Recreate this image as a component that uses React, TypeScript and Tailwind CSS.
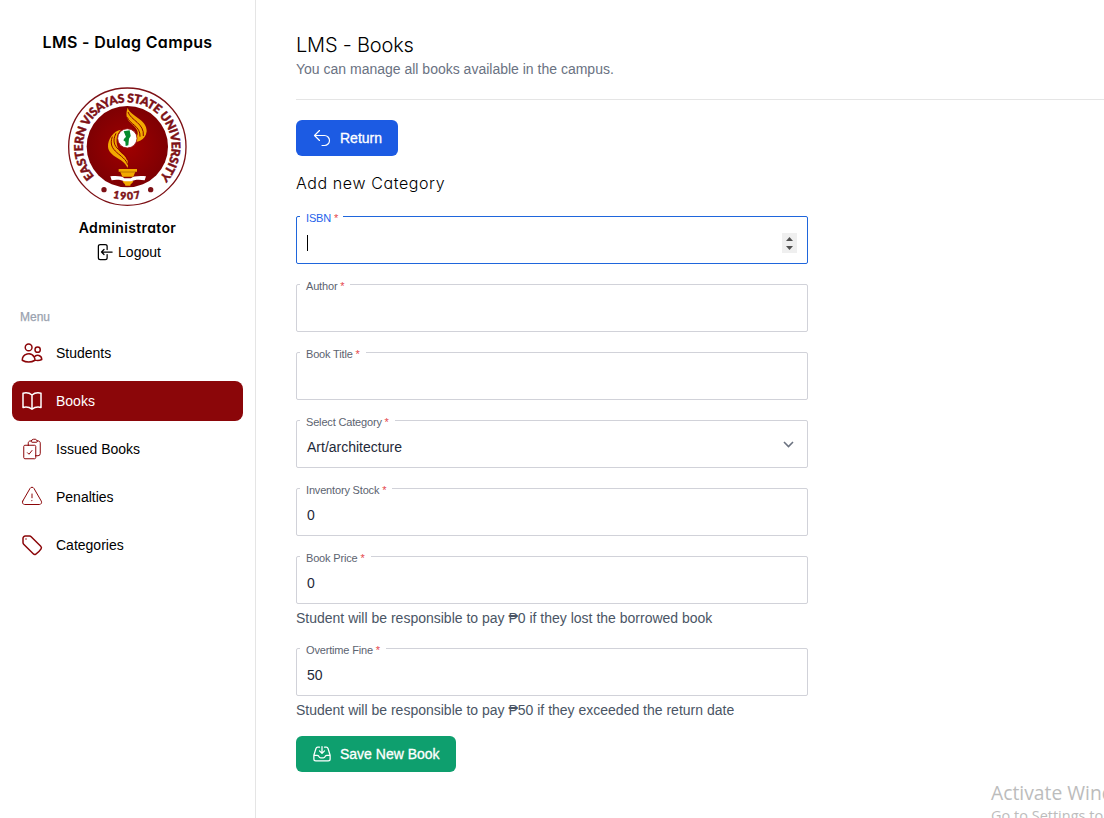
import React from 'react';
import {
  HiOutlineUsers,
  HiOutlineBookOpen,
  HiOutlineClipboardDocumentCheck,
  HiOutlineExclamationTriangle,
  HiOutlineTag,
  HiOutlineArrowLeftOnRectangle,
  HiOutlineArrowUturnLeft,
  HiOutlineInboxArrowDown,
} from 'react-icons/hi2';

const heading = "font-['Inter',sans-serif] [font-feature-settings:'cv11','ss03']";

function Seal() {
  return (
    <svg className="h-[120px] w-[120px]" viewBox="24 21 360 360">
      <defs>
        <radialGradient id="sealRed">
          <stop offset="0" stopColor="#a00000" />
          <stop offset="1" stopColor="#7e0003" />
        </radialGradient>
        <path id="sealTop" d="M103.2 289 A133 133 0 1 1 300.8 289" />
        <path id="sealBottom" d="M120 336 A159 159 0 0 0 284 336" />
      </defs>
      <circle cx="202" cy="200" r="176" fill="#fff" stroke="#7d1015" strokeWidth="4" />
      <circle cx="202" cy="200" r="122" fill="url(#sealRed)" />
      <g fill="#7d1015" stroke="#7d1015" strokeWidth="1.4" fontFamily="Lato, sans-serif" fontWeight="900">
        <text fontSize="36" textLength="616" lengthAdjust="spacing">
          <textPath href="#sealTop">EASTERN VISAYAS STATE UNIVERSITY</textPath>
        </text>
        <text fontSize="31" textAnchor="middle" letterSpacing="4">
          <textPath href="#sealBottom" startOffset="50%">1907</textPath>
        </text>
      </g>
      <circle cx="132" cy="329" r="8" fill="#7d1015" />
      <circle cx="272" cy="329" r="8" fill="#7d1015" />
      <path d="M203 83 C210 108 262 118 260 154 C257 182 230 188 212 188 L224 176 C236 166 234 158 231 150 C224 130 188 126 203 83Z" fill="#f2a900" />
      <path d="M202 112 C208 132 242 138 240 170 M204 96 C212 121 254 130 250 168" fill="none" stroke="#8a0000" strokeWidth="3" />
      <path d="M183 149 C160 152 143 178 144 200 C147 232 190 232 203 264 C212 228 176 221 174 204 C168 188 166 165 183 149Z" fill="#f2a900" />
      <path d="M168 160 C144 208 200 214 202 240 M157 170 C140 216 194 222 203 254" fill="none" stroke="#8a0000" strokeWidth="3" />
      <circle cx="202" cy="175" r="29" fill="#fff" stroke="#9d1515" strokeWidth="2.5" />
      <path d="M191 154 L209 151 L212 168 L207 176 L205 196 L197 198 L196 185 L190 181 L194 174 L198 171Z" fill="#078b2d" />
      <path d="M176 267 H231 V275 H226 L220 290 H187 L181 275 H176Z M188 302 H220 C219 310 211 310 211 317 H196 C196 310 189 310 188 302Z" fill="#f2a900" />
      <path d="M180 276 H227" stroke="#a35b00" strokeWidth="2" />
      <path d="M151 289 C172 287 188 289 193 295 H213 C218 289 236 287 258 289 L254 301 C239 298 221 299 214 304 H193 C186 299 166 298 155 301Z" fill="#fff" />
    </svg>
  );
}

function MenuItem({ icon, label, active }: { icon: React.ReactNode; label: string; active?: boolean }) {
  return (
    <a
      className={
        active
          ? 'flex h-10 items-center gap-3 rounded-lg bg-[#8b0609] px-2 text-white'
          : 'flex h-10 items-center gap-3 rounded-lg px-2 text-black'
      }
    >
      <span className={active ? 'text-2xl text-white' : 'text-2xl text-[#8b0609]'}>{icon}</span>
      <span className="text-sm">{label}</span>
    </a>
  );
}

type FieldProps = { label: string; focused?: boolean; children?: React.ReactNode };

function Field({ label, focused, children }: FieldProps) {
  return (
    <div
      className={
        focused
          ? 'relative flex h-12 w-[512px] items-center rounded-[2px] border border-[#1f66dc] px-2.5'
          : 'relative flex h-12 w-[512px] items-center rounded-[2px] border border-[#d1d2d9] px-2.5'
      }
    >
      <label
        className={
          focused
            ? 'absolute -top-[7px] left-[3px] bg-white pr-[5px] pl-1.5 text-[11px] leading-4 tracking-[-0.17px] text-[#2563eb]'
            : 'absolute -top-[7px] left-[3px] bg-white pr-[6px] pl-1.5 text-[11px] leading-4 tracking-[-0.17px] text-[#5c6370]'
        }
      >
        {label} <span className="text-[#e5484d]">*</span>
      </label>
      <div className="flex flex-1 items-center justify-between pt-[6px] text-sm leading-5 text-gray-800">{children}</div>
    </div>
  );
}

export default function App() {
  return (
    <div className="relative flex h-[818px] w-[1104px] overflow-hidden bg-white font-['Liberation_Sans',Arial,sans-serif]">
      <aside className="flex w-64 shrink-0 flex-col border-r border-[#e5e5e5] px-3">
        <div className="flex flex-col items-center">
          <h1 className={`${heading} mt-[30px] text-base leading-6 font-semibold tracking-[0.33px] text-black`}>LMS - Dulag Campus</h1>
          <div className="mt-[33px]">
            <Seal />
          </div>
          <p className={`${heading} mt-[9px] text-sm leading-6 font-semibold tracking-[0.37px] text-black`}>Administrator</p>
          <button className="flex h-6 items-center gap-1 pl-px text-sm text-black">
            <HiOutlineArrowLeftOnRectangle className="-ml-px text-xl" />
            Logout
          </button>
        </div>
        <p className="mt-[45px] pl-2 text-xs leading-4 text-gray-400 [-webkit-text-stroke:0.25px_#9ca3af]">Menu</p>
        <nav className="mt-2 flex flex-col gap-2">
          <MenuItem icon={<HiOutlineUsers />} label="Students" />
          <MenuItem icon={<HiOutlineBookOpen />} label="Books" active />
          <MenuItem icon={<HiOutlineClipboardDocumentCheck strokeWidth={1} />} label="Issued Books" />
          <MenuItem icon={<HiOutlineExclamationTriangle strokeWidth={1} />} label="Penalties" />
          <MenuItem icon={<HiOutlineTag />} label="Categories" />
        </nav>
      </aside>

      <main className="flex flex-1 flex-col pt-[31px] pl-10">
        <h2 className={`${heading} text-xl leading-7 font-light tracking-[-0.2px] text-black`}>LMS - Books</h2>
        <p className="text-sm leading-5 text-gray-500">You can manage all books available in the campus.</p>
        <hr className="mt-5 border-[#e5e5e5]" />
        <button className="mt-5 flex h-9 w-[102px] items-center gap-2 rounded-md bg-[#1c5be3] pl-4 text-sm text-white [-webkit-text-stroke:0.3px_white]">
          <HiOutlineArrowUturnLeft className="text-xl" strokeWidth={1.4} />
          Return
        </button>
        <h3 className={`${heading} mt-[15px] mb-[21px] text-base leading-6 font-light tracking-[0.6px] text-black`}>Add new Category</h3>

        <form className="flex flex-col">
          <div className="flex flex-col gap-5">
            <Field label="ISBN" focused>
              <span className="h-4 w-px bg-black" />
              <span className="flex h-5 w-[15px] flex-col items-center justify-center gap-[5px] bg-[#efefef]">
                <svg className="h-1 w-[7px]" viewBox="0 0 7 4">
                  <path d="M0 4 L3.5 0 L7 4Z" fill="#505050" />
                </svg>
                <svg className="h-1 w-[7px]" viewBox="0 0 7 4">
                  <path d="M0 0 L3.5 4 L7 0Z" fill="#505050" />
                </svg>
              </span>
            </Field>
            <Field label="Author" />
            <Field label="Book Title" />
            <Field label="Select Category">
              <span>Art/architecture</span>
              <svg className="mr-[3px] mb-1.5 h-[7px] w-[11px]" viewBox="0 0 11 7">
                <path d="M1 1 L5.5 5.5 L10 1" fill="none" stroke="#6b7280" strokeWidth="1.6" />
              </svg>
            </Field>
            <Field label="Inventory Stock">0</Field>
            <Field label="Book Price">0</Field>
          </div>
          <p className="mt-1 mb-5 text-sm leading-5 text-gray-600">Student will be responsible to pay ₱0 if they lost the borrowed book</p>
          <Field label="Overtime Fine">50</Field>
          <p className="mt-1 text-sm leading-5 text-gray-600">Student will be responsible to pay ₱50 if they exceeded the return date</p>
          <button
            type="button"
            className="mt-4 flex h-9 w-40 items-center gap-2 rounded-md bg-[#0e9f6e] pl-4 text-sm text-white [-webkit-text-stroke:0.3px_white]"
          >
            <HiOutlineInboxArrowDown className="text-xl" />
            Save New Book
          </button>
        </form>
      </main>

      <div className="absolute top-[779px] left-[991px] font-['Open_Sans',sans-serif] whitespace-nowrap text-[#bcbcbc]">
        <p className="text-[19.3px] leading-7">Activate Windows</p>
        <p className="text-[14.5px] leading-[18px]">Go to Settings to activate Windows.</p>
      </div>
    </div>
  );
}
